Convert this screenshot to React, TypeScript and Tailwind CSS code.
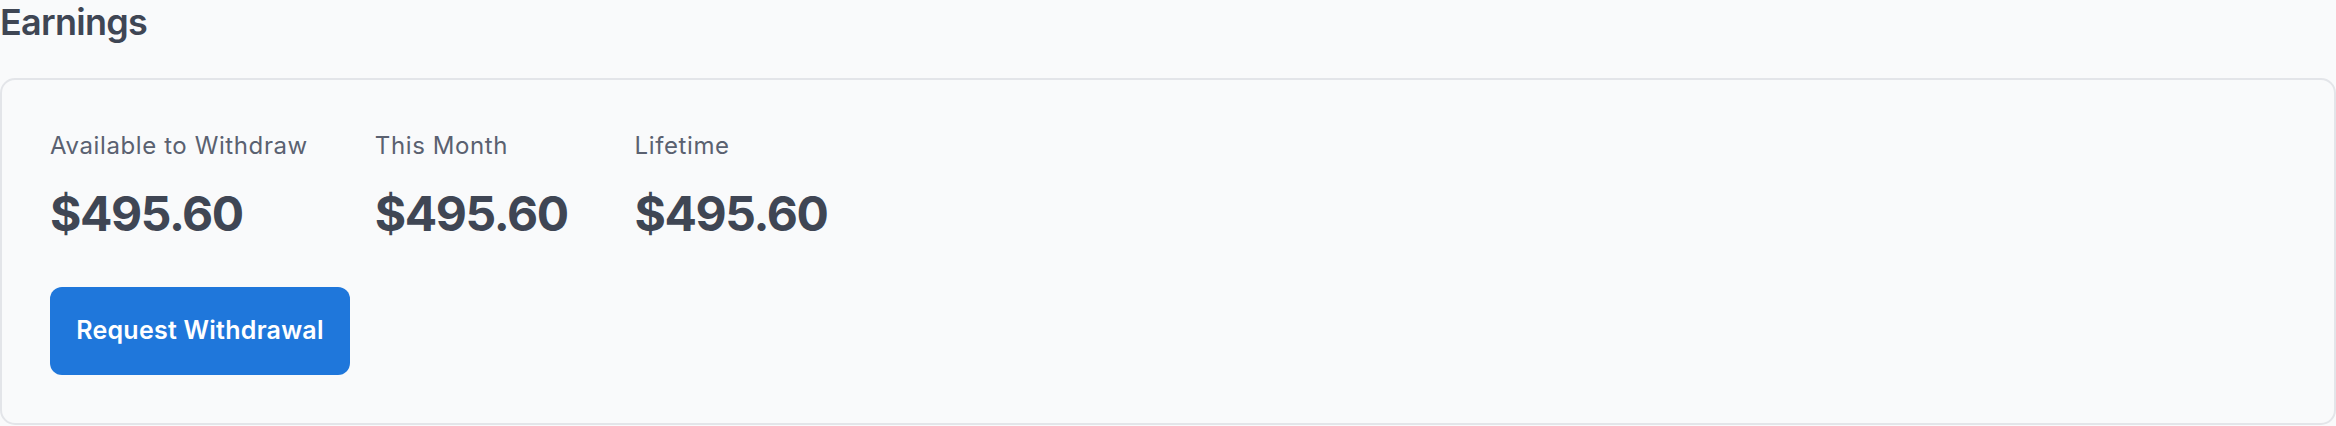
import React from 'react';

const stats = [
  { label: 'Available to Withdraw', value: '$495.60' },
  { label: 'This Month', value: '$495.60' },
  { label: 'Lifetime', value: '$495.60' },
];

export default function App() {
  return (
    <div
      className="min-h-screen w-full bg-[#f9fafb]"
      style={{ fontFamily: 'Inter, "Noto Sans", sans-serif' }}
    >
      <h2 className="text-[36px] leading-[44px] font-semibold text-[#3f4654] tracking-[-0.02em] mb-[34px]">
        Earnings
      </h2>

      <div className="rounded-[15px] border-2 border-[#e3e5e9] bg-[#f9fafb] p-[48px]">
        <div className="flex gap-[67px]">
          {stats.map((s) => (
            <div key={s.label} className="flex flex-col">
              <span className="text-[24px] leading-[36px] tracking-[0.025em] text-[#5a6170]">{s.label}</span>
              <span className="mt-[26px] text-[48px] leading-[48px] font-bold tracking-[-0.03em] text-[#3f4654]">
                {s.value}
              </span>
            </div>
          ))}
        </div>

        <button className="mt-[49px] flex h-[88px] w-[300px] items-center justify-center rounded-[12px] bg-[#1f77db] text-[25px] font-semibold tracking-[0.01em] text-white">
          Request Withdrawal
        </button>
      </div>
    </div>
  );
}
